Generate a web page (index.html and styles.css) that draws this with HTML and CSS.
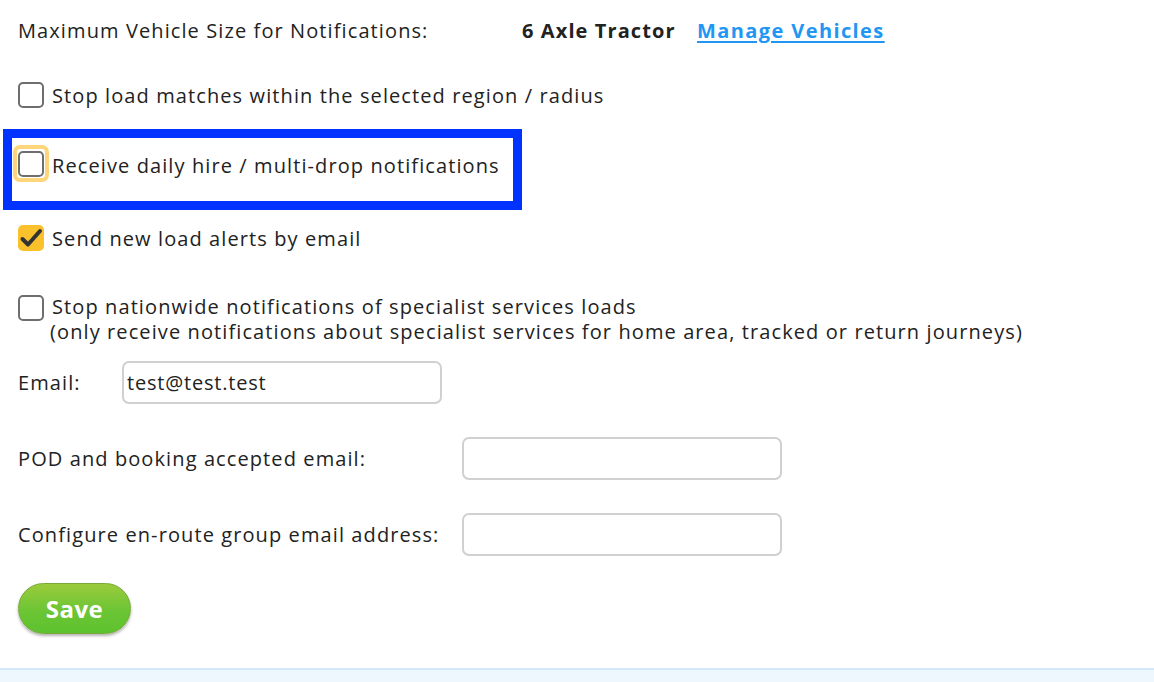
FILE: index.html
```html
<!DOCTYPE html>
<html>
<head>
<meta charset="utf-8">
<link rel="stylesheet" href="styles.css">
</head>
<body>
<div class="page">
  <div class="row top-row">
    <span class="label-wide">Maximum Vehicle Size for Notifications:</span>
    <span class="vehicle">6 Axle Tractor</span>
    <a class="manage" href="#">Manage Vehicles</a>
  </div>

  <label class="check-row row-stop">
    <span class="box"></span>
    <span class="check-text">Stop load matches within the selected region / radius</span>
  </label>

  <div class="highlight">
    <label class="check-row">
      <span class="focus-ring"><span class="box"></span></span>
      <span class="check-text">Receive daily hire / multi-drop notifications</span>
    </label>
  </div>

  <label class="check-row row-alerts">
    <span class="box checked">
      <svg viewBox="0 0 26 26" width="26" height="26"><path d="M4.5 14 L10 19.5 L22 6" fill="none" stroke="#333333" stroke-width="4" stroke-linecap="round" stroke-linejoin="round"/></svg>
    </span>
    <span class="check-text">Send new load alerts by email</span>
  </label>

  <div class="check-row row-nation">
    <span class="box"></span>
    <div class="nation-text">
      <div class="check-text">Stop nationwide notifications of specialist services loads</div>
      <div class="sub-text">(only receive notifications about specialist services for home area, tracked or return journeys)</div>
    </div>
  </div>

  <div class="field-row row-email">
    <span class="field-label email-label">Email:</span>
    <div class="input">test@test.test</div>
  </div>

  <div class="field-row row-pod">
    <span class="field-label long-label">POD and booking accepted email:</span>
    <div class="input"></div>
  </div>

  <div class="field-row row-group">
    <span class="field-label long-label">Configure en-route group email address:</span>
    <div class="input"></div>
  </div>

  <button class="save">Save</button>
</div>
<div class="footer"></div>
</body>
</html>
```

FILE: styles.css
```css
html, body {
  margin: 0;
  padding: 0;
  background: #ffffff;
}

body {
  font-family: "Open Sans", "Liberation Sans", sans-serif;
  font-size: 20px;
  letter-spacing: 1.1px;
  color: #222222;
  width: 1154px;
  height: 682px;
  overflow: hidden;
  display: flex;
  flex-direction: column;
}

.page {
  padding-left: 18px;
  height: 668px;
  display: flex;
  flex-direction: column;
  align-items: flex-start;
}

.row {
  display: flex;
  align-items: center;
  height: 30px;
}

.top-row {
  margin-top: 15px;
}

.label-wide {
  width: 504px;
}

.vehicle {
  font-weight: 700;
  width: 175px;
}

.manage {
  color: #2196f3;
  font-weight: 700;
  letter-spacing: 1.4px;
  text-decoration: underline;
  text-underline-offset: 3px;
}

.check-row {
  display: flex;
  align-items: center;
  height: 30px;
}

.box {
  box-sizing: border-box;
  width: 26px;
  height: 26px;
  border: 2px solid #6e6e6e;
  border-radius: 5px;
  background: #ffffff;
  display: flex;
  align-items: center;
  justify-content: center;
  flex: none;
}

.box.checked {
  border: none;
  background: #fbc12d;
}

.check-text {
  margin-left: 8px;
}

.row-stop {
  margin-top: 35px;
}

.highlight {
  margin-top: 19px;
  margin-left: -15px;
  box-sizing: border-box;
  width: 519px;
  height: 81px;
  border: 9px solid #0033ff;
  padding-left: 1px;
  padding-top: 7px;
  display: flex;
  align-items: flex-start;
}

.focus-ring {
  box-sizing: border-box;
  width: 36px;
  height: 37px;
  border: 4px solid #fdd57a;
  border-radius: 7px;
  display: flex;
  align-items: center;
  justify-content: center;
}

.highlight .check-row {
  height: 37px;
}

.highlight .check-text {
  margin-left: 3px;
  padding-top: 4px;
}

.row-alerts {
  margin-top: 13px;
}

.row-nation {
  margin-top: 41px;
  align-items: flex-start;
  height: auto;
}

.row-nation .box {
  margin-top: 1px;
}

.nation-text {
  display: flex;
  flex-direction: column;
}

.nation-text .check-text {
  line-height: 25px;
}

.sub-text {
  line-height: 25px;
  margin-left: 6px;
}

.field-row {
  display: flex;
  align-items: center;
}

.field-label {
  flex: none;
}

.email-label {
  width: 104px;
}

.long-label {
  width: 444px;
}

.input {
  box-sizing: border-box;
  width: 320px;
  height: 43px;
  border: 2px solid #d0d0d0;
  border-radius: 7px;
  padding-left: 3px;
  display: flex;
  align-items: center;
  background: #ffffff;
  letter-spacing: 0.8px;
}

.row-email {
  margin-top: 17px;
}

.row-pod {
  margin-top: 33px;
}

.row-group {
  margin-top: 33px;
}

.save {
  margin-top: 27px;
  width: 113px;
  height: 51px;
  border-radius: 26px;
  border: 1px solid #77a83a;
  background: linear-gradient(to bottom, #9acb3c 0%, #6cc534 55%, #5dc22f 100%);
  color: #ffffff;
  font-family: "Open Sans", "Liberation Sans", sans-serif;
  font-size: 24px;
  font-weight: 700;
  letter-spacing: 0.5px;
  box-shadow: 0 2px 3px rgba(0, 0, 0, 0.3);
  cursor: pointer;
}

.footer {
  flex: 1;
  border-top: 2px solid #d3e8fb;
  background: #eef6fe;
}
```
